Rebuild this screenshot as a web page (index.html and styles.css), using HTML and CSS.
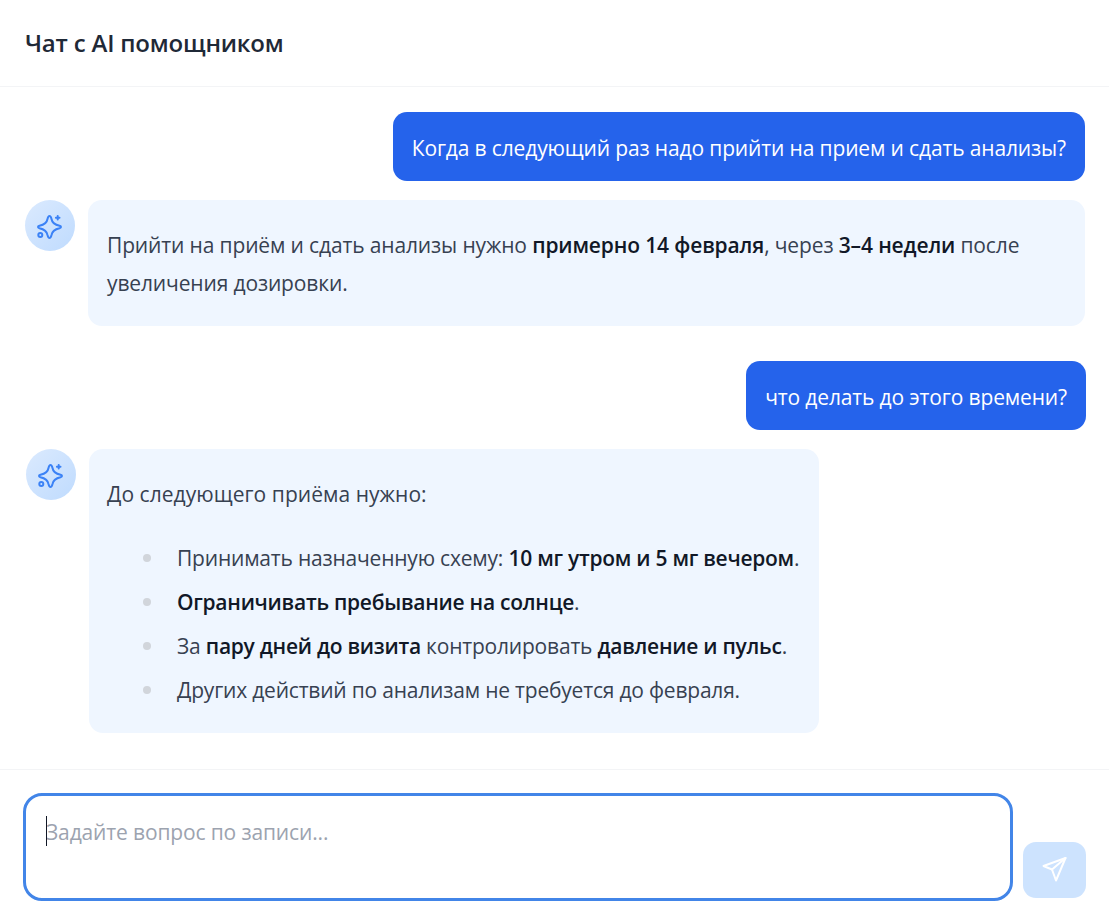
FILE: index.html
```html
<!DOCTYPE html>
<html lang="ru">
<head>
    <meta charset="UTF-8">
    <title>Чат с AI помощником</title>
    <link rel="stylesheet" href="styles.css">
</head>
<body>
    <div class="chat">
        <header class="chat-header">
            <h1>Чат с AI помощником</h1>
        </header>

        <div class="messages">
            <div class="msg-user">Когда в следующий раз надо прийти на прием и сдать анализы?</div>

            <div class="msg-ai">
                <div class="avatar">
                    <svg viewBox="0 0 50 50" width="50" height="50" fill="none" stroke="currentColor" stroke-width="2" stroke-linecap="round" stroke-linejoin="round">
                        <path d="M24.500 15C25.500 15 26 16 26.500 18C27 21 28.500 23.500 34.500 24.800C36.500 25.300 36.500 26.700 34.500 27.200C28.500 28.500 27 31 26.500 34C26 36 25.500 37 24.500 37C23.500 37 23 36 22.500 34C22 31 20.500 28.500 14.500 27.200C12.500 26.700 12.500 25.300 14.500 24.800C20.500 23.500 22 21 22.500 18C23 16 23.500 15 24.500 15Z"/>
                        <path d="M32.700 15v3.600M30.900 16.800h3.600"/>
                        <circle cx="15.300" cy="34" r="2"/>
                    </svg>
                </div>
                <div class="bubble-ai bubble-wide">
                    <p>Прийти на приём и сдать анализы нужно <strong>примерно 14 февраля</strong>, через <strong>3–4 недели</strong> после увеличения дозировки.</p>
                </div>
            </div>

            <div class="msg-user msg-short">что делать до этого времени?</div>

            <div class="msg-ai msg-last">
                <div class="avatar">
                    <svg viewBox="0 0 50 50" width="50" height="50" fill="none" stroke="currentColor" stroke-width="2" stroke-linecap="round" stroke-linejoin="round">
                        <path d="M24.500 15C25.500 15 26 16 26.500 18C27 21 28.500 23.500 34.500 24.800C36.500 25.300 36.500 26.700 34.500 27.200C28.500 28.500 27 31 26.500 34C26 36 25.500 37 24.500 37C23.500 37 23 36 22.500 34C22 31 20.500 28.500 14.500 27.200C12.500 26.700 12.500 25.300 14.500 24.800C20.500 23.500 22 21 22.500 18C23 16 23.500 15 24.500 15Z"/>
                        <path d="M32.700 15v3.600M30.900 16.800h3.600"/>
                        <circle cx="15.300" cy="34" r="2"/>
                    </svg>
                </div>
                <div class="bubble-ai">
                    <p class="lead">До следующего приёма нужно:</p>
                    <ul>
                        <li>Принимать назначенную схему: <strong>10 мг утром и 5 мг вечером</strong>.</li>
                        <li><strong>Ограничивать пребывание на солнце</strong>.</li>
                        <li>За <strong>пару дней до визита</strong> контролировать <strong>давление и пульс</strong>.</li>
                        <li>Других действий по анализам не требуется до февраля.</li>
                    </ul>
                </div>
            </div>
        </div>

        <div class="composer">
            <div class="input-box">
                <span class="caret"></span>
                <span class="placeholder">Задайте вопрос по записи...</span>
            </div>
            <button class="send-btn">
                <svg viewBox="0 0 63 56" width="63" height="56" fill="none" stroke="currentColor" stroke-width="2" stroke-linecap="round" stroke-linejoin="round">
                    <path d="M42.500 16 20.500 24 29 27.500 33 38.500Z"/>
                    <path d="M42.500 16 29 27.500"/>
                </svg>
            </button>
        </div>
    </div>
</body>
</html>
```

FILE: styles.css
```css
* {
    margin: 0;
    padding: 0;
    box-sizing: border-box;
}

html, body {
    height: 100%;
}

body {
    background: #fff;
    color: #374151;
    font-family: "Open Sans", "Noto Sans", sans-serif;
    font-size: 21px;
    letter-spacing: -0.14px;
    overflow: hidden;
}

.chat {
    height: 913px;
    display: flex;
    flex-direction: column;
}

.chat-header {
    height: 87px;
    padding: 0 25px 2px;
    display: flex;
    align-items: center;
    border-bottom: 1px solid #f3f4f6;
}

.chat-header h1 {
    font-size: 24px;
    font-weight: 600;
    color: #1f2937;
    letter-spacing: -0.2px;
}

.messages {
    flex: 1;
    padding: 25px 24px 0 25px;
    display: flex;
    flex-direction: column;
}

.msg-user {
    align-self: flex-end;
    height: 69px;
    padding: 2px 19px 0;
    display: flex;
    align-items: center;
    background: #2563eb;
    color: #fff;
    border-radius: 14px;
    white-space: nowrap;
}

.msg-short {
    margin-top: 35px;
    margin-right: -1px;
}

.msg-ai {
    margin-top: 19px;
    display: flex;
    gap: 13px;
    align-items: flex-start;
}

.msg-last {
    margin-left: 1px;
}

.avatar {
    flex: none;
    width: 50px;
    height: 51px;
    border-radius: 50%;
    background: linear-gradient(135deg, #dbeafe, #bfdbfe);
    color: #3b82f6;
    display: flex;
    align-items: center;
    justify-content: center;
}

.bubble-ai {
    background: #eff6ff;
    border-radius: 14px;
    padding: 26px 20px 21px 18px;
    line-height: 38px;
}

.bubble-ai p {
    margin-bottom: 3px;
}

.bubble-ai .lead {
    letter-spacing: 0.05px;
}

.bubble-wide {
    flex: 1;
    padding-left: 19px;
}

.bubble-ai strong {
    font-weight: 600;
    color: #111827;
}

.bubble-ai ul {
    list-style: none;
    margin-top: 23px;
    padding-left: 70px;
    letter-spacing: -0.2px;
}

.bubble-ai li {
    position: relative;
    line-height: 44px;
}

.bubble-ai li strong {
    letter-spacing: -0.26px;
}

.bubble-ai li::before {
    content: '';
    position: absolute;
    left: -34px;
    top: 18px;
    width: 8px;
    height: 8px;
    border-radius: 50%;
    background: #d1d5db;
}

.composer {
    height: 144px;
    border-top: 1px solid #f3f4f6;
    padding: 23px 23px 0;
    display: flex;
    gap: 10px;
    align-items: flex-start;
}

.input-box {
    position: relative;
    width: 990px;
    height: 108px;
    border: 3px solid #4285e8;
    border-radius: 19px;
    padding: 22px 20px;
    line-height: 28px;
}

.placeholder {
    color: #9ca3af;
}

.caret {
    position: absolute;
    left: 20px;
    top: 20px;
    width: 1px;
    height: 30px;
    background: #111827;
}

.send-btn {
    width: 63px;
    height: 56px;
    margin-top: 49px;
    border: none;
    border-radius: 13px;
    background: #cde3fe;
    color: #fff;
    display: flex;
    align-items: center;
    justify-content: center;
}
```
